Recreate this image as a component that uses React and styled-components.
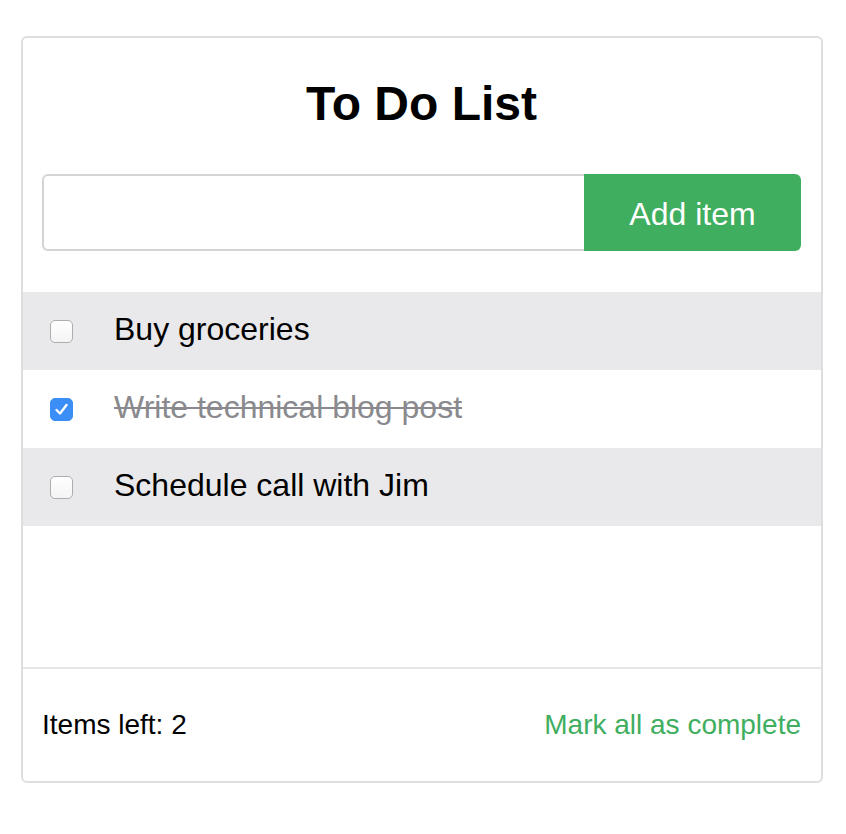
import React, { useState } from 'react'
import styled, { createGlobalStyle } from 'styled-components'

const GlobalStyle = createGlobalStyle`
  html, body {
    margin: 0;
    padding: 0;
    background: #fff;
  }
  body {
    font-family: "Liberation Sans", Arial, Helvetica, sans-serif;
    color: #000;
  }
`

const Page = styled.div`
  padding: 36px 23px 40px 21px;
`

const Card = styled.div`
  width: 802px;
  box-sizing: border-box;
  border: 2px solid #dedede;
  border-radius: 6px;
  background: #fff;
  overflow: hidden;
`

const Header = styled.div`
  padding: 0 20px 0 19px;
`

const Title = styled.h1`
  margin: 0;
  padding-top: 38px;
  height: 96px;
  box-sizing: border-box;
  font-size: 48px;
  line-height: 56px;
  font-weight: bold;
  text-align: center;
`

const Form = styled.form`
  display: flex;
  height: 77px;
  margin-top: 40px;
`

const Input = styled.input`
  flex: 1;
  min-width: 0;
  box-sizing: border-box;
  border: 2px solid #d4d4d6;
  border-right: none;
  border-radius: 6px 0 0 6px;
  font-family: inherit;
  font-size: 30px;
  padding: 0 16px;
  outline: none;
`

const AddButton = styled.button`
  width: 217px;
  border: none;
  border-radius: 0 6px 6px 0;
  background: #3fae5f;
  color: #fff;
  font-family: inherit;
  font-size: 32px;
  padding: 4px 0 0;
  cursor: pointer;
`

const List = styled.ul`
  list-style: none;
  margin: 41px 0 0;
  padding: 0;
  min-height: 375px;
`

const Row = styled.li`
  display: flex;
  align-items: center;
  height: 78px;
  padding-left: 27px;
  background: ${p => (p.$shaded ? '#e9e9eb' : '#fff')};
`

const Box = styled.span`
  flex: none;
  width: 23px;
  height: 23px;
  box-sizing: border-box;
  border-radius: 5px;
  display: flex;
  align-items: center;
  justify-content: center;
  cursor: pointer;
  border: 1px solid ${p => (p.$checked ? '#3a8ef5' : '#adadb0')};
  background: ${p => (p.$checked ? '#3a8ef5' : 'linear-gradient(#fff, #f4f4f4)')};
`

const Label = styled.span`
  margin-left: 41px;
  font-size: 32px;
  line-height: 36px;
  padding-bottom: 4px;
  color: ${p => (p.$done ? '#8a8a8e' : '#000')};
  text-decoration: ${p => (p.$done ? 'line-through' : 'none')};
  text-decoration-thickness: 2px;
`

const Footer = styled.div`
  display: flex;
  align-items: center;
  justify-content: space-between;
  height: 112px;
  padding: 0 20px 0 19px;
  border-top: 2px solid #e6e6e6;
  font-size: 28px;
`

const MarkAll = styled.button`
  border: none;
  background: none;
  padding: 0;
  font-family: inherit;
  font-size: 28px;
  color: #3fae5f;
  cursor: pointer;
`

const Check = () => (
  <svg width='17' height='17' viewBox='0 0 17 17'>
    <path d='M3.5 9 L7 12.5 L13.5 4' fill='none' stroke='#fff' strokeWidth='2.4' strokeLinecap='round' strokeLinejoin='round' />
  </svg>
)

const initialItems = [
  { id: 1, text: 'Buy groceries', done: false },
  { id: 2, text: 'Write technical blog post', done: true },
  { id: 3, text: 'Schedule call with Jim', done: false }
]

export default function App() {
  const [items, setItems] = useState(initialItems)
  const [draft, setDraft] = useState('')

  const toggle = id => {
    setItems(items.map(it => (it.id === id ? { ...it, done: !it.done } : it)))
  }

  const add = e => {
    e.preventDefault()
    if (!draft.trim()) return
    setItems([...items, { id: Date.now(), text: draft.trim(), done: false }])
    setDraft('')
  }

  const left = items.filter(it => !it.done).length

  return (
    <Page>
      <GlobalStyle />
      <Card>
        <Header>
          <Title>To Do List</Title>
          <Form onSubmit={add}>
            <Input value={draft} onChange={e => setDraft(e.target.value)} />
            <AddButton type='submit'>Add item</AddButton>
          </Form>
        </Header>
        <List>
          {items.map((it, i) => (
            <Row key={it.id} $shaded={i % 2 === 0}>
              <Box $checked={it.done} onClick={() => toggle(it.id)}>
                {it.done && <Check />}
              </Box>
              <Label $done={it.done}>{it.text}</Label>
            </Row>
          ))}
        </List>
        <Footer>
          <span>Items left: {left}</span>
          <MarkAll onClick={() => setItems(items.map(it => ({ ...it, done: true })))}>
            Mark all as complete
          </MarkAll>
        </Footer>
      </Card>
    </Page>
  )
}
